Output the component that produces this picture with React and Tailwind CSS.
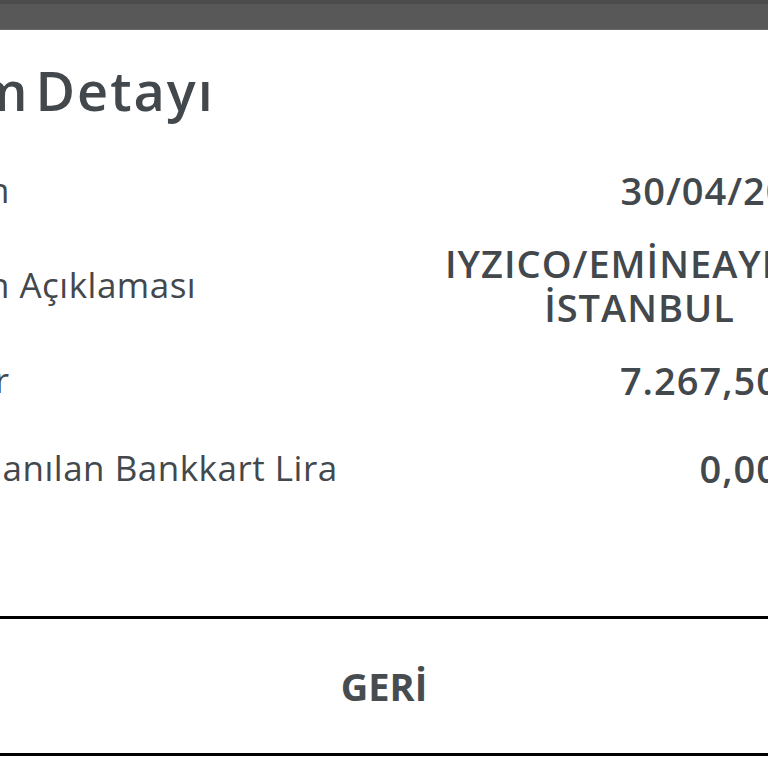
export default function App() {
  const rows = [
    { label: "İşlem", value: "30/04/2025" },
    { label: "İşlem Açıklaması", value: ["IYZICO/EMİNEAYDIN", "İSTANBUL"] },
    { label: "Tutar", value: "7.267,50 TL" },
    { label: "Kullanılan Bankkart Lira", value: "0,00 TL", shift: true },
  ];

  return (
    <div className="w-[768px] h-[768px] overflow-hidden bg-white font-['Open_Sans',sans-serif] text-[#43484c]">
      {/* top bar */}
      <div className="h-[30px] bg-[#585858] border-t-4 border-b border-t-[#4c4c4c] border-b-[#6a6a6a]" />

      <h1 className="-ml-[121px] mt-[30px] h-[60px] leading-[60px] text-[54px] font-semibold tracking-[2px] [word-spacing:-10px] whitespace-nowrap">
        İşlem Detayı
      </h1>

      <div className="-ml-[80px] w-[914px] mt-[48px] flex flex-col">
        {rows.map((row, i) => (
          <div
            key={row.label}
            className={`flex items-center justify-between ${i === 0 ? "" : i === 3 ? "mt-[44px]" : "mt-[29px]"}`}
          >
            <span className={`text-[35px] leading-[44px] tracking-[0.5px] ${row.shift ? "ml-[20px]" : ""}`}>
              {row.label}
            </span>
            {Array.isArray(row.value) ? (
              <span className="text-center text-[38px] leading-[44px] font-semibold tracking-[1px]">
                {row.value[0]}
                <br />
                {row.value[1]}
              </span>
            ) : (
              <span className="text-[38px] leading-[44px] font-semibold tracking-[1px]">{row.value}</span>
            )}
          </div>
        ))}
      </div>

      <div className="-mx-[22px] mt-[126px] h-[140px] rounded-[24px] border-[3px] border-black flex items-center justify-center">
        <span className="text-[38px] font-bold text-[#474c50]">GERİ</span>
      </div>
    </div>
  );
}
